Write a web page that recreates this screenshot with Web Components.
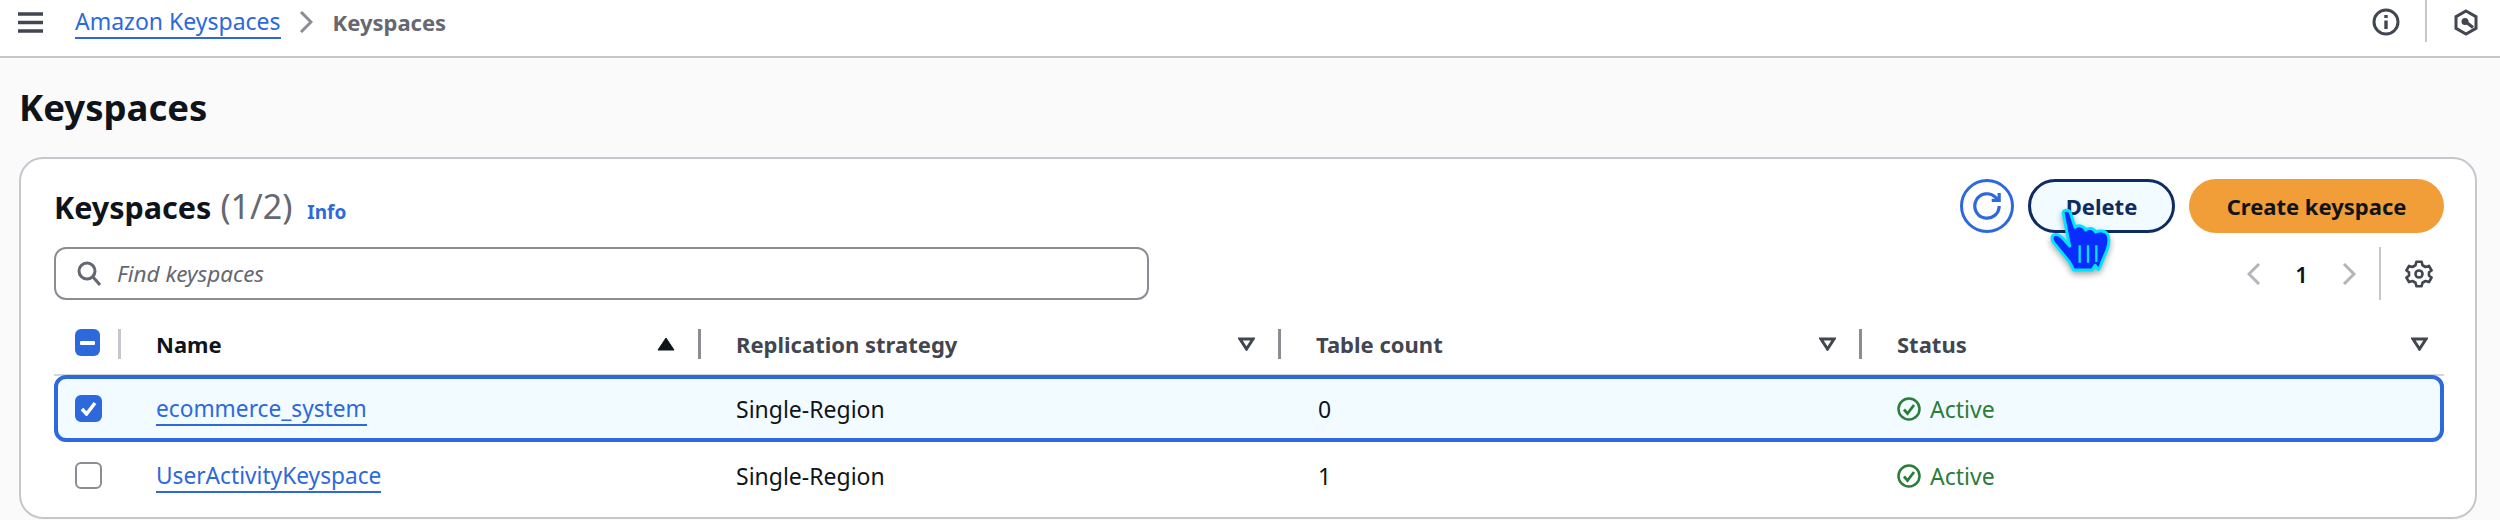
<!DOCTYPE html>
<html>
<head>
<meta charset="utf-8">
<title>Keyspaces</title>
<style>
	html, body {
		margin: 0;
		padding: 0;
		width: 2500px;
		height: 520px;
		overflow: hidden;
		background: #fafafa;
		font-family: "Noto Sans", "Open Sans", sans-serif;
		color: #0f141a;
	}
	body {
		display: flex;
		flex-direction: column;
		position: relative;
	}
</style>
</head>
<body>
<top-bar></top-bar>
<page-title>Keyspaces</page-title>
<keyspace-card>
	<keyspace-row name="ecommerce_system" count="0" selected></keyspace-row>
	<keyspace-row name="UserActivityKeyspace" count="1"></keyspace-row>
</keyspace-card>
<hand-cursor></hand-cursor>

<script>
const BLUE = '#2d69dc';
const COLUMNS = '67px 580px 580px 581px 1fr';

function define(tag, html, init) {
	const tpl = document.createElement('template');
	tpl.innerHTML = html;
	customElements.define(tag, class extends HTMLElement {
		constructor() {
			super();
			this.attachShadow({ mode: 'open' });
			this.shadowRoot.appendChild(tpl.content.cloneNode(true));
		}
		connectedCallback() {
			if (init) init(this, this.shadowRoot);
		}
	});
}

define('top-bar', `
	<style>
	:host {
		display: flex;
		align-items: center;
		flex: none;
		box-sizing: border-box;
		height: 58px;
		padding: 0 22px 12px 18px;
		background: #fff;
		border-bottom: 2px solid #c6c6cd;
	}
	.menu { width: 25px; height: 21px; margin-right: 32px; }
	a {
		color: ${BLUE};
		font-size: 23px;
		line-height: 30px;
		text-decoration: none;
		border-bottom: 2px solid ${BLUE};
		height: 31px;
	}
	.chev { width: 14px; height: 22px; margin: 0 20px 0 18px; }
	b { font-size: 22px; font-weight: 700; color: #656871; }
	.end { margin-left: auto; display: flex; align-items: center; height: 100%; }
	.sep { width: 2px; height: 42px; margin: 0 27px 0 25px; background: #c6c6cd; align-self: flex-start; }
	svg { display: block; fill: none; stroke: #424650; stroke-width: 2; }
	</style>
	<svg class="menu" viewBox="0 0 25 21" style="stroke-width:3.4"><path d="M0 2h25M0 10.5h25M0 19h25"/></svg>
	<a>Amazon Keyspaces</a>
	<svg class="chev" viewBox="0 0 14 22" style="stroke:#8c8c94;stroke-width:3"><path d="M2 1l10 10L2 21"/></svg>
	<b>Keyspaces</b>
	<div class="end">
		<svg width="28" height="28" viewBox="0 0 28 28" style="stroke-width:3"><circle cx="14" cy="14" r="12"/><path d="M14 12.5V21" stroke-width="3.4"/><path d="M14 7v3" stroke-width="3.4"/></svg>
		<div class="sep"></div>
		<svg width="24" height="27" viewBox="0 0 24 27" style="stroke-width:3"><path d="M12 2l10 5.7v11.6L12 25 2 19.300V7.700z"/><circle cx="11" cy="12.500" r="3.500" fill="#424650" stroke="none"/><path d="M12 13l7 5.500"/></svg>
	</div>
`);

define('page-title', `
	<style>
	:host {
		display: block;
		flex: none;
		box-sizing: border-box;
		height: 99px;
		padding: 25px 0 0 19px;
		font-size: 36.5px;
		line-height: 48px;
		font-weight: 700;
	}
	</style>
	<slot></slot>
`);

define('keyspace-card', `
	<style>
	:host {
		display: block;
		flex: none;
		box-sizing: border-box;
		width: 2458px;
		height: 362px;
		margin-left: 19px;
		padding: 20px 31px 0 33px;
		background: #fff;
		border: 2px solid #c6c6cd;
		border-radius: 24px;
	}
	.head {
		display: grid;
		grid-template-columns: 1095px 1fr;
		grid-template-rows: 54px 53px;
		row-gap: 14px;
	}
	.title { display: flex; align-items: baseline; padding-top: 7px; font-size: 30.5px; line-height: 40px; }
	.title b { font-weight: 700; }
	.title span { color: #656871; margin-left: 9px; font-size: 34px; }
	.title a { color: ${BLUE}; font-size: 19px; font-weight: 700; margin-left: 15px; }
	.actions { display: flex; justify-content: flex-end; align-items: center; gap: 14px; }
	.refresh {
		box-sizing: border-box;
		width: 54px; height: 54px;
		border: 3px solid ${BLUE};
		border-radius: 50%;
		display: flex; align-items: center; justify-content: center;
	}
	.btn {
		box-sizing: border-box;
		height: 54px;
		border-radius: 27px;
		display: flex; align-items: center; justify-content: center;
		font-size: 22px; font-weight: 700;
	}
	.delete { width: 147px; border: 3px solid #0f2b63; background: #f2fbff; color: #0f2b63; }
	.create { width: 255px; background: #f19d38; color: #0f141a; }
	.search {
		box-sizing: border-box;
		height: 53px;
		border: 2px solid #8c8c94;
		border-radius: 12px;
		display: flex; align-items: center;
		padding-left: 21px;
		color: #656871;
		font-size: 22.500px;
		font-style: italic;
	}
	.search svg { margin-right: 16px; }
	.pager { display: flex; align-items: center; justify-content: flex-end; }
	.pager .num { font-size: 22px; font-weight: 600; width: 81px; text-align: center; }
	.pager .sep { width: 2px; height: 53px; background: #c6c6cd; margin: 0 24px 0 23px; }
	.pager .gap { width: 11px; }
	svg { display: block; fill: none; }
	.thead {
		display: grid;
		grid-template-columns: ${COLUMNS};
		box-sizing: border-box;
		height: 52px;
		margin-top: 24px;
		margin-bottom: -1px;
		border-bottom: 2px solid #d5d5da;
		align-items: start;
	}
	.check { display: flex; padding: 5px 0 0 21px; }
	.check i {
		box-sizing: border-box;
		width: 27px; height: 27px;
		border-radius: 6px;
		background: ${BLUE};
		display: flex; align-items: center; justify-content: center;
	}
	.check u { display: block; width: 15px; height: 4px; background: #fff; border-radius: 1px; }
	.check em { display: block; width: 3px; height: 30px; margin-left: 18px; background: #c6c6cd; }
	.col {
		display: flex;
		align-items: center;
		height: 30px;
		padding: 5px 0 0 35px;
		font-size: 22px;
		font-weight: 700;
		color: #424650;
		line-height: 30px;
	}
	.col span { flex: 1; }
	.col.sorted { color: #0f141a; }
	.col svg { margin-right: 23px; }
	.col em { display: block; width: 3px; height: 30px; background: #8c8c94; }
	.col.last svg { margin-right: 16px; }
	</style>
	<div class="head">
		<div class="title"><b>Keyspaces</b><span>(1/2)</span><a>Info</a></div>
		<div class="actions">
			<div class="refresh"><svg width="30" height="30" viewBox="0 0 16 16" stroke="${BLUE}" stroke-width="1.700"><path d="M14.500 8a6.500 6.500 0 1 1-2-4.700l2 1.700"/><path d="M14.500 1v4h-4"/></svg></div>
			<div class="btn delete">Delete</div>
			<div class="btn create">Create keyspace</div>
		</div>
		<div class="search">
			<svg width="24" height="26" viewBox="0 0 24 26" stroke="#656871" stroke-width="3"><circle cx="10" cy="10" r="8"/><path d="M16 16l7 8"/></svg>
			Find keyspaces
		</div>
		<div class="pager">
			<svg width="14" height="22" viewBox="0 0 14 22" stroke="#b4b4bb" stroke-width="3"><path d="M12 1L2 11l10 10"/></svg>
			<div class="num">1</div>
			<svg width="14" height="22" viewBox="0 0 14 22" stroke="#b4b4bb" stroke-width="3"><path d="M2 1l10 10L2 21"/></svg>
			<div class="sep"></div>
			<svg width="28" height="28" viewBox="0 0 16 16" stroke="#424650" stroke-width="1.500" stroke-linejoin="round"><path d="M6.500 1h3l.5 2 1.700 1 2-.6 1.500 2.600-1.500 1v2l1.500 1-1.500 2.600-2-.6-1.700 1-.5 2h-3l-.5-2-1.700-1-2 .6L.8 10l1.500-1V7L.8 6l1.500-2.600 2 .6 1.700-1z"/><circle cx="8" cy="8" r="2"/></svg>
			<div class="gap"></div>
		</div>
	</div>
	<div class="thead">
		<div class="check"><i><u></u></i><em></em></div>
		<div class="col sorted"><span>Name</span><svg width="18" height="14" viewBox="0 0 18 14"><path d="M9 1l8 12H1z" fill="#0f141a" stroke="#0f141a" stroke-linejoin="round"/></svg><em></em></div>
		<div class="col"><span>Replication strategy</span><svg width="17" height="14" viewBox="0 0 17 14" stroke="#424650" stroke-width="3"><path d="M2 2h13L8.500 12z"/></svg><em></em></div>
		<div class="col"><span>Table count</span><svg width="17" height="14" viewBox="0 0 17 14" stroke="#424650" stroke-width="3"><path d="M2 2h13L8.500 12z"/></svg><em></em></div>
		<div class="col last"><span>Status</span><svg width="17" height="14" viewBox="0 0 17 14" stroke="#424650" stroke-width="3"><path d="M2 2h13L8.500 12z"/></svg></div>
	</div>
	<slot></slot>
`);

define('keyspace-row', `
	<style>
	:host {
		display: grid;
		grid-template-columns: ${COLUMNS};
		align-items: center;
		box-sizing: border-box;
		height: 67px;
		font-size: 23px;
		border: 4px solid transparent;
		border-radius: 12px;
	}
	:host([selected]) {
		background: #f2fbff;
		border-color: ${BLUE};
	}
	.box {
		box-sizing: border-box;
		width: 27px; height: 27px;
		margin-left: 17px;
		border: 2px solid #8c8c94;
		border-radius: 6px;
		background: #fff;
		display: flex; align-items: center; justify-content: center;
	}
	:host([selected]) .box { background: ${BLUE}; border-color: ${BLUE}; }
	.box svg { display: none; }
	:host([selected]) .box svg { display: block; }
	.name { padding-left: 31px; font-size: 22.700px; }
	.strategy { padding-left: 31px; }
	.count { padding-left: 33px; }
	a { color: ${BLUE}; border-bottom: 2px solid ${BLUE}; }
	.status { display: flex; align-items: center; gap: 9px; padding-left: 31px; color: #2a7d3a; }
	</style>
	<div><div class="box"><svg width="17" height="15" viewBox="0 0 17 15" fill="none" stroke="#fff" stroke-width="3.500"><path d="M2 8l4.500 5L15 2"/></svg></div></div>
	<div class="name"><a id="elName"></a></div>
	<div class="strategy">Single-Region</div>
	<div class="count" id="elCount"></div>
	<div class="status">
		<svg width="24" height="26" viewBox="0 0 24 26" fill="none" stroke="#2a7d3a" stroke-width="2.500"><circle cx="12" cy="13" r="10.500"/><path d="M7 13.500l3.500 4L17 9" stroke-width="2.800"/></svg>
		Active
	</div>
`, (el, root) => {
	root.getElementById('elName').textContent = el.getAttribute('name');
	root.getElementById('elCount').textContent = el.getAttribute('count');
});

define('hand-cursor', `
	<style>
	:host {
		display: block;
		position: absolute;
		left: 2048px;
		top: 205px;
		width: 65px;
		height: 70px;
		filter: drop-shadow(0 3px 3px rgba(0,0,0,0.35));
	}
	svg { display: block; }
	</style>
	<svg width="65" height="70" viewBox="85 105 195 210">
		<path d="M130 128c3-10 18-10 22 0l14 44c8-8 26-6 32 8 8-8 24-6 30 6 10-6 30-4 36 8 6 8 4 30-2 46l-16 38c-2 10-6 16-10 20l-10-12-8 14h-56l-14-26-46-56c-6-10-8-20 2-24 8-2 18 2 28 14l18 20z" fill="#0a2cff" stroke="#00e5ff" stroke-width="9" stroke-linejoin="round"/>
		<path d="M180 226v52M205 226v52M230 226v50" stroke="#00e5ff" stroke-width="7" fill="none"/>
	</svg>
`);
</script>
</body>
</html>
